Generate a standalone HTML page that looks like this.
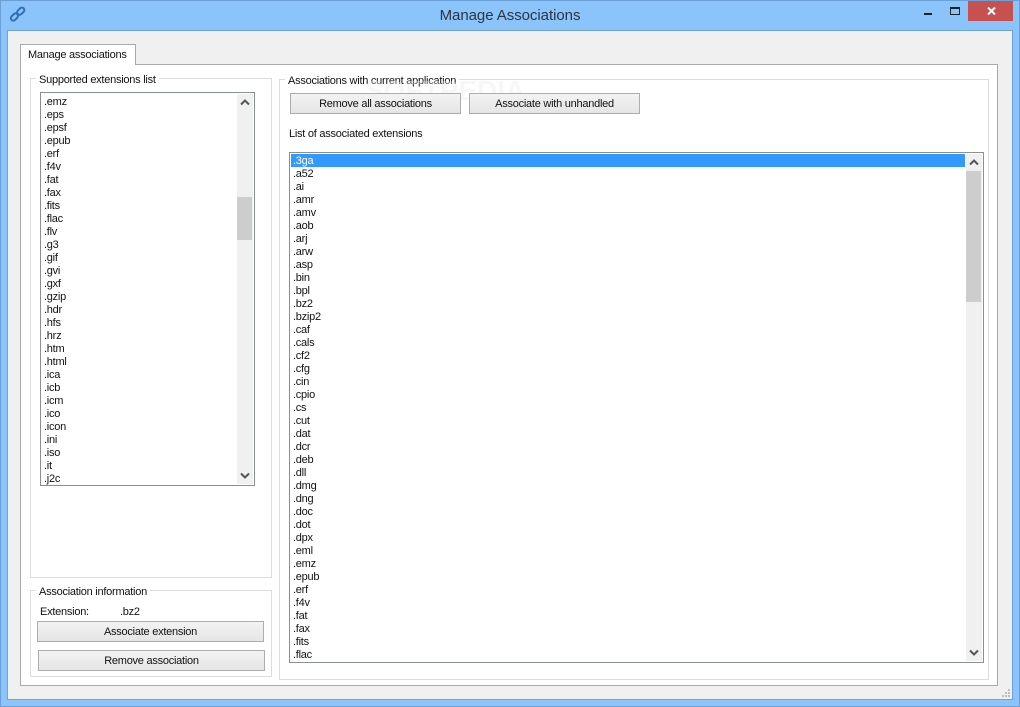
<!DOCTYPE html>
<html><head><meta charset="utf-8"><style>
html,body{margin:0;padding:0;background:#8ac4fb}
#w{position:relative;width:1020px;height:707px;overflow:hidden;background:#8ac4fb;font:11px/13px "Liberation Sans",sans-serif;letter-spacing:-.25px;color:#111}
#w div{position:absolute;box-sizing:border-box;white-space:nowrap}
.grp{border:1px solid #dcdcdc}
.leg{background:#fff;padding:0 3px;height:13px}
.btn{border:1px solid #adadad;background:linear-gradient(#f3f3f3,#e5e5e5);text-align:center;line-height:21px}
.lst{border:1px solid #8a8e95;background:#fff}
.sb{background:#f0f0f0}
.th{background:#cdcdcd}
.t{line-height:13px}
</style></head><body><div id="w">
<div style="left:0;top:0;width:1020px;height:707px;border:1px solid #6b9fd6"></div>
<svg style="position:absolute;left:9px;top:6px" width="18" height="18" viewBox="0 0 20 20" fill="none" stroke="#2f6fb0" stroke-width="2.2"><rect x="1.5" y="9.5" width="9" height="5.5" rx="2.7" transform="rotate(-45 6 12.2)"/><rect x="8.5" y="3" width="9" height="5.5" rx="2.7" transform="rotate(-45 13 5.7)"/></svg>
<div style="left:0;top:6px;width:1020px;text-align:center;font-size:15px;line-height:20px;color:#2d3540;letter-spacing:-.05px">Manage Associations</div>
<div style="left:924px;top:13px;width:8px;height:2px;background:#222"></div>
<div style="left:950px;top:7px;width:10px;height:8px;border:1px solid #222;border-top-width:2px"></div>
<div style="left:968px;top:1px;width:45px;height:20px;background:#c75050"></div>
<svg style="position:absolute;left:987px;top:7px" width="9" height="8" viewBox="0 0 9 8"><path d="M1 0.5L8 7.5M8 0.5L1 7.5" stroke="#fff" stroke-width="2"/></svg>
<div style="left:7px;top:30px;width:1006px;height:670px;background:#f0f0f0;border:1px solid #6fa3d8"></div>
<div style="left:20px;top:64px;width:978px;height:622px;background:#fff;border:1px solid #a9a9a9"></div>
<div style="left:20px;top:44px;width:116px;height:21px;background:#fff;border:1px solid #a9a9a9;border-bottom:0;padding:4px 0 0 7px">Manage associations</div>

<div class="grp" style="left:30px;top:78px;width:242px;height:500px"></div>
<div class="leg" style="left:36px;top:74px">Supported extensions list</div>
<div class="lst" style="left:40px;top:92px;width:215px;height:394px"></div>
<div class="sb" style="left:237px;top:94px;width:16px;height:390px"></div>
<div class="th" style="left:237px;top:197px;width:15px;height:43px"></div>
<svg style="position:absolute;left:240px;top:99px" width="10" height="7"><path d="M1 5.5L5 1.5L9 5.5" fill="none" stroke="#555" stroke-width="2"/></svg>
<svg style="position:absolute;left:240px;top:472px" width="10" height="7"><path d="M1 1.5L5 5.5L9 1.5" fill="none" stroke="#555" stroke-width="2"/></svg>
<div class="t" style="left:44px;top:96px">.emz<br>.eps<br>.epsf<br>.epub<br>.erf<br>.f4v<br>.fat<br>.fax<br>.fits<br>.flac<br>.flv<br>.g3<br>.gif<br>.gvi<br>.gxf<br>.gzip<br>.hdr<br>.hfs<br>.hrz<br>.htm<br>.html<br>.ica<br>.icb<br>.icm<br>.ico<br>.icon<br>.ini<br>.iso<br>.it<br>.j2c</div>

<div class="grp" style="left:30px;top:590px;width:242px;height:87px"></div>
<div class="leg" style="left:36px;top:586px">Association information</div>
<div style="left:40px;top:606px">Extension:</div>
<div style="left:120px;top:606px">.bz2</div>
<div class="btn" style="left:37px;top:621px;width:227px;height:21px">Associate extension</div>
<div class="btn" style="left:38px;top:650px;width:227px;height:21px">Remove association</div>

<div class="grp" style="left:279px;top:79px;width:710px;height:601px"></div>
<div class="leg" style="left:285px;top:75px">Associations with current application</div>
<div style="left:365px;top:76px;font:bold 28px/30px 'Liberation Sans',sans-serif;letter-spacing:0;color:rgba(235,235,235,.4)">SOFTPEDIA</div>
<div class="btn" style="left:290px;top:93px;width:171px;height:21px">Remove all associations</div>
<div class="btn" style="left:469px;top:93px;width:171px;height:21px">Associate with unhandled</div>
<div style="left:289px;top:128px">List of associated extensions</div>
<div class="lst" style="left:289px;top:152px;width:695px;height:511px"></div>
<div style="left:291px;top:154px;width:674px;height:13px;background:#3399ff"></div>
<div class="sb" style="left:966px;top:154px;width:16px;height:507px"></div>
<div class="th" style="left:966px;top:171px;width:15px;height:131px"></div>
<svg style="position:absolute;left:969px;top:159px" width="10" height="7"><path d="M1 5.5L5 1.5L9 5.5" fill="none" stroke="#555" stroke-width="2"/></svg>
<svg style="position:absolute;left:969px;top:649px" width="10" height="7"><path d="M1 1.5L5 5.5L9 1.5" fill="none" stroke="#555" stroke-width="2"/></svg>
<div class="t" style="left:293px;top:155px"><span style="color:#fff">.3ga</span><br>.a52<br>.ai<br>.amr<br>.amv<br>.aob<br>.arj<br>.arw<br>.asp<br>.bin<br>.bpl<br>.bz2<br>.bzip2<br>.caf<br>.cals<br>.cf2<br>.cfg<br>.cin<br>.cpio<br>.cs<br>.cut<br>.dat<br>.dcr<br>.deb<br>.dll<br>.dmg<br>.dng<br>.doc<br>.dot<br>.dpx<br>.eml<br>.emz<br>.epub<br>.erf<br>.f4v<br>.fat<br>.fax<br>.fits<br>.flac</div>
<svg style="position:absolute;left:1001px;top:689px" width="10" height="9" fill="#bdbdbd"><rect x="7" y="0" width="2" height="2"/><rect x="4" y="3" width="2" height="2"/><rect x="7" y="3" width="2" height="2"/><rect x="1" y="6" width="2" height="2"/><rect x="4" y="6" width="2" height="2"/><rect x="7" y="6" width="2" height="2"/></svg>
</div></body></html>
